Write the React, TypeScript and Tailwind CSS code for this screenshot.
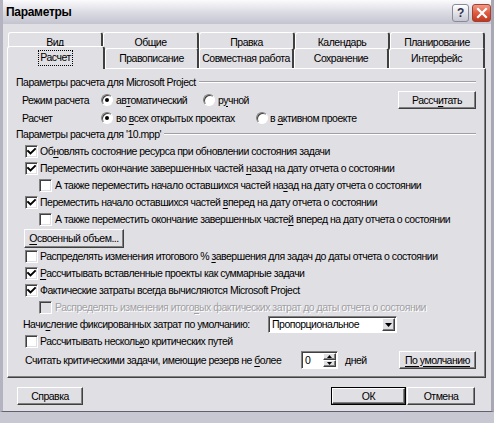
import React from 'react'

// Диалог «Параметры» (вкладка «Расчет») в стиле Windows XP Silver / классических контролов.

function U({ children }: { children: React.ReactNode }) {
  return <span className="underline decoration-1 underline-offset-[2px]">{children}</span>
}

function Check({ checked, disabled }: { checked?: boolean; disabled?: boolean }) {
  return (
    <span
      className={`relative inline-flex h-[13px] w-[13px] shrink-0 items-center justify-center border border-t-[#808080] border-l-[#808080] border-r-white border-b-white shadow-[inset_1px_1px_0_#404040,inset_-1px_-1px_0_#e0dfe3] ${disabled ? 'bg-[#e0dfe3]' : 'bg-white'}`}
    >
      {checked && (
        <svg viewBox="0 0 11 11" className="h-[11px] w-[11px]">
          <path d="M2 5 L4.5 7.5 L9 3" fill="none" stroke="black" strokeWidth="1.9" strokeLinecap="square" />
        </svg>
      )}
    </span>
  )
}

function Radio({ checked }: { checked?: boolean }) {
  return (
    <span className="relative inline-flex h-[12px] w-[12px] shrink-0 items-center justify-center rounded-full border border-t-[#808080] border-l-[#808080] border-r-white border-b-white bg-white shadow-[inset_1px_1px_0_#404040]">
      {checked && <span className="h-[4px] w-[4px] rounded-full bg-black" />}
    </span>
  )
}

function Btn({ children, className = '', def }: { children: React.ReactNode; className?: string; def?: boolean }) {
  return (
    <div
      className={`flex items-center justify-center whitespace-nowrap border ${def ? 'border-black' : 'border-t-white border-l-white border-r-[#404040] border-b-[#404040]'} ${className}`}
    >
      <div
        className={`flex h-full w-full items-center justify-center ${def ? 'border border-t-white border-l-white border-r-[#404040] border-b-[#404040] shadow-[inset_-1px_-1px_0_#808080]' : 'shadow-[inset_-1px_-1px_0_#808080]'}`}
      >
        {children}
      </div>
    </div>
  )
}

function GroupTitle({ children }: { children: React.ReactNode }) {
  return (
    <div className="flex h-[14px] items-center pl-[8px] pr-[9px]">
      <span className="whitespace-nowrap pr-[3px]">{children}</span>
      <div className="h-[2px] flex-1 border-t border-t-[#a0a0a4] border-b border-b-white" />
    </div>
  )
}

function CheckRow({
  children,
  checked,
  indent,
  disabled,
}: {
  children: React.ReactNode
  checked?: boolean
  indent?: boolean
  disabled?: boolean
}) {
  return (
    <div className={`flex h-[17px] items-center whitespace-nowrap ${indent ? 'pl-[31px]' : 'pl-[17px]'}`}>
      <Check checked={checked} disabled={disabled} />
      <span className={`pl-[2px] ${disabled ? 'text-[#a0a0a4] [text-shadow:1px_1px_0_#ffffff]' : ''} ${indent ? 'pl-[3px]' : ''}`}>{children}</span>
    </div>
  )
}

const tabTop = 'border-t border-l border-t-white border-l-white border-r-2 border-r-[#404040] rounded-tl-[3px] rounded-tr-[3px]'

export default function App() {
  return (
    <div className="h-[423px] w-[494px] overflow-hidden bg-[#c8c8d2] font-['Liberation_Sans','Noto_Sans',sans-serif] text-[10.5px] leading-[13px] tracking-[-0.5px] text-black">
      <div className="flex h-[412px] flex-col border-l-[3px] border-r-[3px] border-b border-l-[#b4b4c0] border-r-[#a8a8b4] border-b-[#606070] bg-[#e0dfe3]">
        {/* заголовок окна */}
        <div className="flex h-[24px] items-center justify-between bg-gradient-to-b from-[#fbfbfd] via-[#dcdce4] to-[#c4c4d0] pl-[3px] pr-[0px]">
          <span className="text-[12px] font-bold tracking-[-0.3px]">Параметры</span>
          <div className="flex items-center gap-[3px] pt-[2px]">
            <div className="flex h-[18px] w-[17px] items-center justify-center rounded-[3px] border border-[#8a8a9a] bg-gradient-to-b from-white to-[#c6c6d2] text-[12px] font-bold text-[#30304a]">
              ?
            </div>
            <div className="flex h-[18px] w-[19px] items-center justify-center rounded-[3px] border border-[#a04030] bg-gradient-to-b from-[#f09a88] via-[#de5a40] to-[#c0381e]">
              <svg viewBox="0 0 12 12" className="h-[12px] w-[12px]">
                <path d="M2 2 L10 10 M10 2 L2 10" stroke="white" strokeWidth="2.2" strokeLinecap="square" />
              </svg>
            </div>
          </div>
        </div>

        {/* вкладки */}
        <div className="mt-[8px] flex h-[16px] pl-[5px]">
          {[
            ['Вид', 95],
            ['Общие', 96],
            ['Правка', 96],
            ['Календарь', 95],
            ['Планирование', 95],
          ].map(([t, w]) => (
            <div key={t as string} className={`h-[18px] whitespace-nowrap text-center ${tabTop}`} style={{ width: w as number }}>
              <span className="block pt-[3px]">{t}</span>
            </div>
          ))}
        </div>
        <div className="relative z-10 flex h-[20px] items-end pl-[4px]">
          <div className={`-mb-[1px] flex h-[23px] w-[98px] items-center justify-center bg-[#e0dfe3] ${tabTop}`}>
            <span className="border border-dotted border-black px-[1px] pb-[1px]">Расчет</span>
          </div>
          {[
            ['Правописание', 94],
            ['Совместная работа', 95],
            ['Сохранение', 95],
            ['Интерфейс', 96],
          ].map(([t, w]) => (
            <div key={t as string} className={`flex h-[20px] items-center justify-center whitespace-nowrap bg-[#e0dfe3] ${tabTop}`} style={{ width: w as number }}>
              {t}
            </div>
          ))}
        </div>

        {/* панель вкладки */}
        <div className="ml-[4px] mr-[5px] flex h-[310px] flex-col border border-t-white border-l-white border-r-[#404040] border-b-[#404040] shadow-[inset_-1px_-1px_0_#808080]">
          <div className="mt-[6px]">
            <GroupTitle>Параметры расчета для Microsoft Project</GroupTitle>
          </div>
          <div className="mt-[2px] flex h-[18px] items-center whitespace-nowrap pl-[14px] pr-[9px]">
            <span className="w-[79px]">Режим расчета</span>
            <span className="flex w-[102px] items-center gap-[3px]">
              <Radio checked />
              <span>
                ав<U>т</U>оматический
              </span>
            </span>
            <span className="flex items-center gap-[3px]">
              <Radio />
              <span>
                р<U>у</U>чной
              </span>
            </span>
            <Btn className="ml-auto h-[18px] w-[78px]">
              <span>
                Рассч<U>и</U>тать
              </span>
            </Btn>
          </div>
          <div className="flex h-[18px] items-center whitespace-nowrap pl-[14px]">
            <span className="w-[79px]">Расчет</span>
            <span className="flex w-[155px] items-center gap-[3px]">
              <Radio checked />
              <span>
                во <U>в</U>сех открытых проектах
              </span>
            </span>
            <span className="flex items-center gap-[2px]">
              <Radio />
              <span>
                в <U>а</U>ктивном проекте
              </span>
            </span>
          </div>
          <GroupTitle>Параметры расчета для '10.mpp'</GroupTitle>
          <div className="h-[2px]" />
          <CheckRow checked>
            Об<U>н</U>овлять состояние ресурса при обновлении состояния задачи
          </CheckRow>
          <CheckRow checked>
            Переместить окончание завершенных частей <U>н</U>азад на дату отчета о состоянии
          </CheckRow>
          <CheckRow indent>
            А также переместить начало оставшихся частей на<U>з</U>ад на дату отчета о состоянии
          </CheckRow>
          <CheckRow checked>
            Переместить начало оставшихся частей <U>в</U>перед на дату отчета о состоянии
          </CheckRow>
          <CheckRow indent>
            А также переместить окончание завершенных часте<U>й</U> вперед на дату отчета о состоянии
          </CheckRow>
          <div className="mt-[1px] flex h-[19px] pl-[16px]">
            <Btn className="h-[19px] w-[100px]">
              <span>
                <U>О</U>своенный объем...
              </span>
            </Btn>
          </div>
          <CheckRow>
            Распределять изменения итогового % <U>з</U>авершения для задач до даты отчета о состоянии
          </CheckRow>
          <CheckRow checked>
            <U>Р</U>ассчитывать вставленные проекты как суммарные задачи
          </CheckRow>
          <CheckRow checked>Фактические затраты всегда вычисляются Microsoft Project</CheckRow>
          <CheckRow indent disabled>
            Распределять изменения итого<U>в</U>ых фактических затрат до даты отчета о состоянии
          </CheckRow>
          <div className="flex h-[17px] items-center whitespace-nowrap pl-[15px]">
            <span className="w-[245px]">
              Начи<U>с</U>ление фиксированных затрат по умолчанию:
            </span>
            <div className="flex h-[17px] w-[129px] items-center border border-t-[#808080] border-l-[#808080] border-r-white border-b-white bg-white shadow-[inset_1px_1px_0_#404040]">
              <span className="flex-1 pl-[3px]">Пропорциональное</span>
              <Btn className="mr-[1px] h-[13px] w-[13px] bg-[#e0dfe3]">
                <svg viewBox="0 0 7 4" className="h-[4px] w-[7px]">
                  <path d="M0 0 H7 L3.5 4 Z" fill="black" />
                </svg>
              </Btn>
            </div>
          </div>
          <CheckRow>
            Рассчитывать несколь<U>к</U>о критических путей
          </CheckRow>
          <div className="mt-[1px] flex h-[18px] items-center whitespace-nowrap pl-[17px] pr-[9px]">
            <span className="w-[276px]">
              Считать критическими задачи, имеющие резерв не <U>б</U>олее
            </span>
            <div className="flex h-[18px] w-[37px] items-center border border-t-[#808080] border-l-[#808080] border-r-white border-b-white bg-white shadow-[inset_1px_1px_0_#404040]">
              <span className="flex-1 pl-[3px]">0</span>
              <div className="mr-[1px] flex h-[14px] w-[13px] flex-col">
                <Btn className="h-[7px] w-[13px] bg-[#e0dfe3]">
                  <svg viewBox="0 0 5 3" className="h-[3px] w-[5px]">
                    <path d="M0 3 H5 L2.5 0 Z" fill="black" />
                  </svg>
                </Btn>
                <Btn className="h-[7px] w-[13px] bg-[#e0dfe3]">
                  <svg viewBox="0 0 5 3" className="h-[3px] w-[5px]">
                    <path d="M0 0 H5 L2.5 3 Z" fill="black" />
                  </svg>
                </Btn>
              </div>
            </div>
            <span className="pl-[7px]">дней</span>
            <Btn className="ml-auto h-[18px] w-[77px]">
              <span className="underline decoration-1 underline-offset-[2px]">По умолчанию</span>
            </Btn>
          </div>
        </div>

        {/* кнопки диалога */}
        <div className="mt-[9px] flex h-[18px] items-center pl-[14px] pr-[16px]">
          <Btn className="h-[18px] w-[66px]">Справка</Btn>
          <Btn def className="ml-auto h-[18px] w-[75px]">
            ОК
          </Btn>
          <Btn className="ml-[1px] h-[18px] w-[68px]">Отмена</Btn>
        </div>
      </div>
    </div>
  )
}
